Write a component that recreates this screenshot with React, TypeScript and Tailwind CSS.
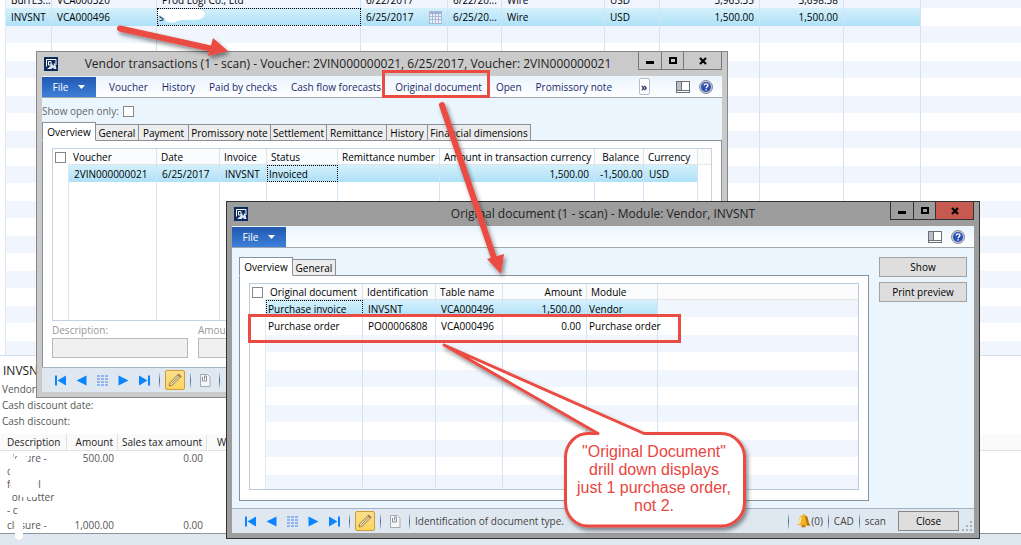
import type { ReactNode } from 'react';

interface Column {
  label?: string;
  width: string;
  align?: 'right';
}

interface GridProps {
  columns: Column[];
  rows: string[][];
  emptyRows?: number;
  selected: number;
  focusCell: number;
  striped?: boolean;
  selectable?: boolean;
  label: string;
}

const ledgerColumns: Column[] = [
  { width: 'w-[46px]' },
  { width: 'w-[105px]' },
  { width: 'w-[204px]' },
  { width: 'w-[87px]' },
  { width: 'w-[54px]' },
  { width: 'w-[103px]' },
  { width: 'w-[55px]' },
  { width: 'w-[100px]', align: 'right' },
  { width: 'w-[84px]', align: 'right' },
  { width: 'w-[77px]' },
];

const ledgerRows = [
  ['BurrES...', 'VCA000320', 'Prod Logi Co., Ltd', '6/22/2017', '6/22/20...', 'Wire', 'USD', '3,965.35', '3,698.58', ''],
  ['INVSNT', 'VCA000496', 's', '6/25/2017', '6/25/20...', 'Wire', 'USD', '1,500.00', '1,500.00', ''],
];

const transactionColumns: Column[] = [
  { label: 'Voucher', width: 'w-[88px]' },
  { label: 'Date', width: 'w-[63px]' },
  { label: 'Invoice', width: 'w-[47px]' },
  { label: 'Status', width: 'w-[71px]' },
  { label: 'Remittance number', width: 'w-[102px]' },
  { label: 'Amount in transaction currency', width: 'w-[155px]', align: 'right' },
  { label: 'Balance', width: 'w-[49px]', align: 'right' },
  { label: 'Currency', width: 'w-[54px]' },
];

const transactionRows = [
  ['2VIN000000021', '6/25/2017', 'INVSNT', 'Invoiced', '', '1,500.00', '-1,500.00', 'USD'],
];

const documentColumns: Column[] = [
  { label: 'Original document', width: 'w-[97px]' },
  { label: 'Identification', width: 'w-[73px]' },
  { label: 'Table name', width: 'w-[67px]' },
  { label: 'Amount', width: 'w-[84px]', align: 'right' },
  { label: 'Module', width: 'w-[71px]' },
];

const documentRows = [
  ['Purchase invoice', 'INVSNT', 'VCA000496', '1,500.00', 'Vendor'],
  ['Purchase order', 'PO00006808', 'VCA000496', '0.00', 'Purchase order'],
];

const transactionTabs = [
  { label: 'Overview', width: 'w-[54px]' },
  { label: 'General', width: 'w-[43px]' },
  { label: 'Payment', width: 'w-[50px]' },
  { label: 'Promissory note', width: 'w-[82px]' },
  { label: 'Settlement', width: 'w-[56px]' },
  { label: 'Remittance', width: 'w-[60px]' },
  { label: 'History', width: 'w-[41px]' },
  { label: 'Financial dimensions', width: 'w-[103px]' },
];

const documentTabs = [
  { label: 'Overview', width: 'w-[54px]' },
  { label: 'General', width: 'w-[43px]' },
];

const menuItems = [
  'Voucher',
  'History',
  'Paid by checks',
  'Cash flow forecasts',
  'Original document',
  'Open',
  'Promissory note',
];

function CalendarIcon() {
  return (
    <svg className="w-[13px] h-[13px] shrink-0" viewBox="0 0 13 13">
      <rect x="0.5" y="0.5" width="12" height="12" fill="#eef3fb" stroke="#a9b8d6" />
      <rect x="1" y="1" width="11" height="2" fill="#9fb0d4" />
      <path d="M3.5 3v9M6.5 3v9M9.5 3v9M1 5.5h11M1 8.5h11" stroke="#a9b8d6" />
    </svg>
  );
}

function Grid({ columns, rows, emptyRows = 0, selected, focusCell, striped, selectable, label }: GridProps) {
  const hasHeader = columns.some((col) => col.label);
  const blank = Array.from({ length: emptyRows }, () => columns.map(() => ''));
  const tight = striped && selectable;

  return (
    <table
      aria-label={label}
      className="w-full table-fixed border-separate border-spacing-0 leading-[14px] text-black"
    >
      <colgroup>
        {selectable && <col className="w-[16px]" />}
        {columns.map((col, i) => (
          <col key={i} className={col.width} />
        ))}
        <col />
      </colgroup>
      {hasHeader && (
        <thead>
          <tr className="h-[16px]">
            {selectable && (
              <th className="p-0">
                <input
                  type="checkbox"
                  aria-label="Select all"
                  className="block ml-[2px] size-[11px] appearance-none border border-[#888] bg-white"
                />
              </th>
            )}
            {columns.map((col) => (
              <th
                key={col.label}
                className={`border-r border-b border-[#dfe3e8] bg-[#fbfcfd] px-[4px] py-0 font-normal whitespace-nowrap ${
                  col.align === 'right' ? 'text-right' : 'text-left'
                }`}
              >
                {col.label}
              </th>
            ))}
            <th className="border-b border-[#e6e6e6] bg-[#fcfcfc] p-0" />
          </tr>
        </thead>
      )}
      <tbody>
        {[...rows, ...blank].map((row, r) => (
          <tr
            key={r}
            className={`${striped && r % 2 === 1 ? 'h-[18px]' : 'h-[17px]'} ${
              striped && r % 2 === 0 ? 'bg-[#f0f5fe]' : 'bg-white'
            }`}
          >
            {selectable && <td className="border-r border-[#dbe8f5] bg-white p-0" />}
            {row.map((value, c) => (
              <td
                key={c}
                className={`py-0 whitespace-nowrap ${
                  columns[c].align === 'right' ? 'text-right' : 'text-left'
                } ${r === selected ? 'bg-linear-to-b from-[#d4f0fb] to-[#aee1f8]' : ''} ${
                  r === selected && c === focusCell
                    ? 'border border-dotted border-black px-px'
                    : `border-r border-[#d3e3f3] ${
                        tight && (c === 0 || c === columns.length - 1) ? 'px-[2px]' : 'px-[5px]'
                      }`
                }`}
              >
                {!hasHeader && r === selected && c === 3 ? (
                  <span className="flex items-center justify-between">
                    {value}
                    <CalendarIcon />
                  </span>
                ) : (
                  value
                )}
              </td>
            ))}
            <td className="p-0" />
          </tr>
        ))}
      </tbody>
    </table>
  );
}

function AppIcon() {
  return (
    <svg className="size-[14px]" viewBox="0 0 14 14">
      <rect width="14" height="14" fill="#0d2a5c" />
      <path d="M2.500 9.500v-7h9.500V8" fill="none" stroke="#fff" />
      <path d="M4.500 4.500h2.500v3.500h-2.500z" fill="none" stroke="#fff" />
      <path d="M3 12l3-2.500 2-3.500 1 3 2-3.500 1.500 6.500H10L9 10.500 7.500 12z" fill="#dfe6f0" />
    </svg>
  );
}

interface TitleBarProps {
  title: string;
  active?: boolean;
}

function TitleBar({ title, active }: TitleBarProps) {
  const edge = active ? 'border-[#333]' : 'border-[#777]';
  return (
    <header className="relative flex h-[24px] items-center pl-[2px]">
      <AppIcon />
      <h2
        className={`text-center text-[12px] leading-4 whitespace-nowrap text-[#222] ${
          active ? 'absolute inset-x-0' : 'flex-1'
        }`}
      >
        {title}
      </h2>
      <div className={`relative ml-auto flex h-[18px] self-start border border-t-0 ${edge}`}>
        <button aria-label="Minimize" className={`grid w-[23px] place-items-center border-r ${edge}`}>
          <svg className="size-[10px]" viewBox="0 0 10 10">
            <path d="M1 6.500h8" stroke="#000" strokeWidth="3" />
          </svg>
        </button>
        <button aria-label="Maximize" className={`grid w-[22px] place-items-center border-r ${edge}`}>
          <svg className="size-[10px]" viewBox="0 0 10 10">
            <rect x="2" y="2" width="6" height="5" fill="none" stroke="#000" strokeWidth="2" />
          </svg>
        </button>
        <button
          aria-label="Close window"
          className={`grid w-[37px] place-items-center ${active ? 'bg-[#c75a50]' : ''}`}
        >
          <svg className="size-[10px]" viewBox="0 0 10 10">
            <path d="M2 2l6 6M8 2l-6 6" stroke="#000" strokeWidth="2.200" />
          </svg>
        </button>
      </div>
    </header>
  );
}

function PaneIcon() {
  return (
    <svg className="h-[12px] w-[14px]" viewBox="0 0 14 12">
      <rect x="0.500" y="0.500" width="13" height="11" fill="#fff" stroke="#6b6f78" />
      <rect x="1" y="1" width="4" height="8" fill="#b9bec6" />
      <path d="M5.500 1v8M1 9.500h12" stroke="#6b6f78" />
    </svg>
  );
}

function HelpIcon() {
  return (
    <svg className="size-[14px]" viewBox="0 0 14 14">
      <circle cx="7" cy="7" r="6.500" fill="#c4c8d0" stroke="#8a8f9a" />
      <circle cx="7" cy="7" r="5" fill="#2b50b4" />
      <path
        d="M5.200 5.600c0-2.400 3.800-2.200 3.700-.1 0 1.300-1.800 1.300-1.800 2.700M7.100 9.200v1.300"
        fill="none"
        stroke="#fff"
        strokeWidth="1.400"
      />
    </svg>
  );
}

function Ribbon({ children }: { children?: ReactNode }) {
  return (
    <nav className="flex h-[22px] items-center border-b border-[#9fa6ae] bg-linear-to-b from-[#eaf4fd] to-white pr-[9px]">
      <button className="flex h-[20px] w-[54px] items-center justify-center gap-[10px] bg-linear-to-b from-[#2258b0] to-[#3d80d8] text-white">
        File
        <svg className="h-[4px] w-[7px]" viewBox="0 0 7 4">
          <path d="M0 0h7L3.500 4z" fill="#fff" />
        </svg>
      </button>
      {children}
      <button aria-label="View" className="ml-auto">
        <PaneIcon />
      </button>
      <button aria-label="Help" className="ml-[9px]">
        <HelpIcon />
      </button>
    </nav>
  );
}

function Tabs({ tabs }: { tabs: { label: string; width: string }[] }) {
  return (
    <div role="tablist" className="relative -mb-px flex items-end">
      {tabs.map((tab, i) => (
        <button
          key={tab.label}
          role="tab"
          aria-selected={i === 0}
          className={`flex items-center justify-center border border-[#8b919b] whitespace-nowrap ${tab.width} ${
            i === 0 ? 'h-[19px] border-b-white bg-white' : 'h-[17px] border-l-0 bg-[#ececec]'
          }`}
        >
          {tab.label}
        </button>
      ))}
    </div>
  );
}

function Separator() {
  return <span className="h-[15px] w-px bg-linear-to-b from-[#c8d4e0] via-[#4b6a8c] to-[#c8d4e0]" />;
}

function StatusBar({ children }: { children?: ReactNode }) {
  return (
    <footer className="flex h-[25px] shrink-0 items-center border-t border-[#a3b3c3] bg-[#dfe8f0] pr-[2px] pl-[13px] text-[#444]">
      <div className="flex items-center gap-[10px]">
        <button aria-label="First record">
          <svg className="size-[11px]" viewBox="0 0 11 11">
            <path d="M0 .5h2v10H0zM11 .5v10L2.500 5.500z" fill="#0a84ff" />
          </svg>
        </button>
        <button aria-label="Previous record">
          <svg className="size-[11px]" viewBox="0 0 11 11">
            <path d="M10.500 .5v10L.5 5.500z" fill="#0a84ff" />
          </svg>
        </button>
        <button aria-label="Grid view">
          <svg className="size-[11px]" viewBox="0 0 11 11">
            {[0, 3, 6, 9].map((y) =>
              [0, 4, 8].map((x) => (
                <rect key={`${x}-${y}`} x={x} y={y} width="3" height="2" fill="#8fb4ee" />
              ))
            )}
          </svg>
        </button>
        <button aria-label="Next record">
          <svg className="size-[11px]" viewBox="0 0 11 11">
            <path d="M.5 .5v10l10-5z" fill="#0a84ff" />
          </svg>
        </button>
        <button aria-label="Last record">
          <svg className="size-[11px]" viewBox="0 0 11 11">
            <path d="M9 .5h2v10H9zM0 .5v10l8.500-5z" fill="#0a84ff" />
          </svg>
        </button>
      </div>
      <div className="ml-[9px] flex items-center gap-[5px]">
        <Separator />
        <button
          aria-label="Edit"
          className="grid size-[20px] place-items-center rounded-[2px] border border-[#d19a3a] bg-linear-to-b from-[#fbe089] to-[#fdd45c]"
        >
          <svg className="size-[14px]" viewBox="0 0 14 14">
            <path d="M1 13l1-3.500 8.500-8.500 2.500 2.500-8.500 8.500z" fill="#f2dba0" stroke="#7a6844" strokeWidth="0.800" />
            <path d="M3.500 10.500l7-7" stroke="#8a7a55" strokeWidth="0.800" />
            <path d="M9.500 2l2.500 2.500 1.200-1.200-2.500-2.500z" fill="#b06a5a" />
          </svg>
        </button>
        <Separator />
        <button aria-label="Attachments" className="mx-[3px]">
          <svg className="h-[13px] w-[12px]" viewBox="0 0 12 13">
            <path d="M1.500 .5h7l2.500 2.500v9.500h-9.500z" fill="#f5f6f8" stroke="#a4aab2" />
            <path d="M3.500 3v4h4V2H5.500v3.500" fill="none" stroke="#8a9099" />
          </svg>
        </button>
        <Separator />
      </div>
      {children}
    </footer>
  );
}

function BellIcon() {
  return (
    <svg className="h-[14px] w-[14px]" viewBox="0 0 14 14">
      <path d="M0 11c2-1.500 2-3 2.300-6C2.600 2.500 4 1.500 5.500 1.500c0-2 2.500-2 2.500 0 2 .5 3 2 3.200 4.500.2 2 .6 3.500 2.300 5.500z" fill="#f0b429" />
      <path d="M4 3.500c-1 2-.5 4-1.800 6.500" fill="none" stroke="#fdeaa5" strokeWidth="1.500" />
      <path d="M8 1.500c2 .5 3 2 3.200 4.500.2 2 .6 3.500 2.300 5.500H10z" fill="#b5700f" />
      <ellipse cx="6.500" cy="12" rx="2.500" ry="1.500" fill="#c98412" />
    </svg>
  );
}

function SizeGrip() {
  const dots = [[8, 0], [8, 4], [4, 4], [8, 8], [4, 8], [0, 8]];
  return (
    <svg className="size-[10px] self-end" viewBox="0 0 10 10">
      {dots.map(([x, y]) => (
        <rect key={`${x}-${y}`} x={x} y={y} width="2" height="2" fill="#a9b1ba" />
      ))}
    </svg>
  );
}

function InvoicePreview() {
  return (
    <section className="relative flex-1 border-b border-[#8d979f] bg-white text-[#555]">
      <h1 className="pt-[5px] pl-[3px] text-[12px] leading-5 text-[#222]">INVSNT</h1>
      <div className="mb-[5px] pl-[2px]">
        <p>Vendor</p>
        <p>Cash discount date:</p>
        <p>Cash discount:</p>
      </div>
      <table aria-label="Invoice lines" className="w-full table-fixed border-separate border-spacing-0">
        <colgroup>
          <col className="w-[67px]" />
          <col className="w-[51px]" />
          <col className="w-[89px]" />
          <col />
        </colgroup>
        <thead className="bg-[#fafafa] text-[#222]">
          <tr className="h-[16px]">
            <th className="border-r border-b border-[#e2e2e2] py-0 pl-[7px] text-left font-normal">Description</th>
            <th className="border-r border-b border-[#e2e2e2] px-[4px] py-0 text-right font-normal">Amount</th>
            <th className="border-r border-b border-[#e2e2e2] px-[4px] py-0 text-right font-normal whitespace-nowrap">
              Sales tax amount
            </th>
            <th className="border-b border-[#e2e2e2] py-0 pl-[10px] text-left font-normal">Withholding tax</th>
          </tr>
        </thead>
        <tbody className="align-top leading-[13px]">
          <tr>
            <td className="py-px pl-[7px]">
              closure -<br />
              custom<br />
              for real<br />
              con cutter<br />
              - c
            </td>
            <td className="px-[4px] py-px text-right">500.00</td>
            <td className="px-[4px] py-px text-right">0.00</td>
            <td />
          </tr>
          <tr>
            <td className="py-px pl-[7px]">closure -</td>
            <td className="px-[4px] py-px text-right">1,000.00</td>
            <td className="px-[4px] py-px text-right">0.00</td>
            <td />
          </tr>
        </tbody>
      </table>
    </section>
  );
}

function VendorTransactions() {
  return (
    <section className="absolute top-[51px] left-[36px] flex h-[347px] w-[692px] flex-col border border-[#888] bg-[#cacaca] px-[5px] pb-[5px]">
      <TitleBar title="Vendor transactions (1 - scan) - Voucher: 2VIN000000021, 6/25/2017, Voucher: 2VIN000000021" />
      <Ribbon>
        <div className="flex gap-[14px] pl-[13px] text-[#1b2a6b]">
          {menuItems.map((item) => (
            <button key={item} className="whitespace-nowrap">
              {item}
            </button>
          ))}
        </div>
        <button
          aria-label="More commands"
          className="ml-auto h-[17px] w-[11px] rounded-[2px] border border-[#b4bcc6] bg-white leading-3 font-bold text-[#1b2a6b]"
        >
          »
        </button>
      </Ribbon>
      <div className="flex flex-1 flex-col bg-[#eaf5fe]">
        <label className="mt-[5px] mb-[3px] flex items-center gap-[4px] text-[#666]">
          Show open only:
          <input type="checkbox" className="size-[11px] appearance-none border border-[#888] bg-white" />
        </label>
        <Tabs tabs={transactionTabs} />
        <div className="flex-1 border border-b-0 border-[#8b919b] bg-white px-[9px] pt-[7px]">
          <div className="h-[173px] overflow-hidden border border-[#c3d3e4]">
            <Grid
              label="Transactions"
              columns={transactionColumns}
              rows={transactionRows}
              emptyRows={10}
              selected={0}
              focusCell={3}
              selectable
            />
          </div>
          <div className="flex gap-[10px] pt-px text-[#999]">
            <label className="w-[136px]">
              Description:
              <input className="block h-[20px] w-full border border-[#b9b9b9] bg-[#f0f0f0]" readOnly />
            </label>
            <label className="w-[136px]">
              Amount:
              <input className="block h-[20px] w-full border border-[#b9b9b9] bg-[#f0f0f0]" readOnly />
            </label>
          </div>
        </div>
      </div>
      <StatusBar />
    </section>
  );
}

function OriginalDocument() {
  return (
    <section className="absolute top-[201px] left-[226px] flex h-[338px] w-[754px] flex-col border border-[#333] bg-[#9d9d9d] px-[5px] pb-[5px]">
      <TitleBar title="Original document (1 - scan) - Module: Vendor, INVSNT" active />
      <Ribbon />
      <div className="flex flex-1 gap-[10px] bg-[#eaf5fe] px-[7px] pt-[9px] pb-[7px]">
        <div className="flex flex-1 flex-col">
          <Tabs tabs={documentTabs} />
          <div className="flex-1 border border-[#8b919b] bg-white px-[9px] pt-[7px]">
            <div className="h-[207px] overflow-hidden border border-[#b9cbdf]">
              <Grid
                label="Original documents"
                columns={documentColumns}
                rows={documentRows}
                emptyRows={9}
                selected={0}
                focusCell={0}
                striped
                selectable
              />
            </div>
          </div>
        </div>
        <div className="flex w-[88px] flex-col gap-[5px]">
          <button className="h-[20px] border border-[#a2a2a2] bg-[#dedede]">Show</button>
          <button className="h-[20px] border border-[#a2a2a2] bg-[#dedede]">Print preview</button>
        </div>
      </div>
      <StatusBar>
        <span className="pl-[5px]">Identification of document type.</span>
        <div className="ml-auto flex items-center gap-[5px]">
          <Separator />
          <button className="ml-[3px] flex items-center">
            <BellIcon />
            (0)
          </button>
          <Separator />
          <span>CAD</span>
          <Separator />
          <span>scan</span>
          <button className="mr-[-2px] ml-[7px] h-[20px] w-[61px] border border-[#888] bg-[#dedede] text-black">
            Close
          </button>
          <SizeGrip />
        </div>
      </StatusBar>
    </section>
  );
}

// Red arrows, frames and speech bubble
function Annotations() {
  return (
    <div className="pointer-events-none absolute top-0 left-0 text-[#e8453f]">
      <svg className="h-[545px] w-[1021px]" viewBox="0 0 1021 545" fill="none">
        <defs>
          <filter id="shadow" x="-20%" y="-20%" width="150%" height="150%">
            <feDropShadow dx="2" dy="3" stdDeviation="2" floodColor="#000" floodOpacity="0.45" />
          </filter>
        </defs>
        <g filter="url(#shadow)">
          <path d="M120 28.500L213 49" stroke="#ea4b43" strokeWidth="6" strokeLinecap="round" />
          <path d="M213 38l15 13-20 5z" fill="#ea4b43" />
          <path d="M442 105L494 258" stroke="#ea4b43" strokeWidth="6" strokeLinecap="round" />
          <path d="M487 259l17-5-3 20z" fill="#ea4b43" />
          <path
            d="M444 345L598 433.500H588A22.500 24 0 0 0 565.500 457V503A22.500 23 0 0 0 588 526H721A23.500 23 0 0 0 744.500 503V457A23.500 24 0 0 0 721 433.500H644Z"
            fill="#fff"
            stroke="#ea4b43"
            strokeWidth="3"
            strokeLinejoin="round"
          />
        </g>
        <rect x="383.500" y="71.500" width="105" height="25" stroke="#ea4b43" strokeWidth="3" />
        <rect x="249.500" y="315.500" width="430" height="26" stroke="#ea4b43" strokeWidth="3" />
      </svg>
      <p className="absolute top-[443px] left-[571px] w-[166px] text-center font-['Liberation_Sans',sans-serif] text-[16px] leading-[18px]">
        "Original Document"
        <br />
        drill down displays
        <br />
        just 1 purchase order,
        <br />
        not 2.
      </p>
    </div>
  );
}

// White brush strokes over the names
function ErasedNames() {
  return (
    <svg className="absolute top-0 left-0 h-[545px] w-[220px]" viewBox="0 0 220 545" fill="#fff">
      <path d="M158 9h40q8 2 7 6-2 5-12 5-14-1-17 2-6 2-10-1-1-4-5-5l-3-1z" />
      <path d="M6 452h6l2 6 2 1 1-3h8l5 2-4 7H6z" />
      <path d="M10 464h20l6 5 8-1v4l-4 4H20v13h-8l-2-6z" />
      <path d="M20 475h15l3 10v12H20z" />
      <path d="M6 490h6v11H6z" />
      <path d="M15 515h8v22q-4 6-8 0z" />
    </svg>
  );
}

export default function App() {
  return (
    <main className="relative flex h-screen flex-col overflow-hidden bg-[#dfe8f0] font-['Open_Sans','Noto_Sans',sans-serif] text-[10px] leading-4">
      <div className="h-[356px] shrink-0 overflow-hidden border-b border-[#cfe0f0] bg-white">
        <div className="-mt-[9px] ml-[5px] border-l border-[#dbe8f5]">
          <Grid
            label="Invoice journal"
            columns={ledgerColumns}
            rows={ledgerRows}
            emptyRows={19}
            selected={1}
            focusCell={2}
            striped
          />
        </div>
      </div>
      <InvoicePreview />
      <div className="h-[12px] shrink-0" />
      <ErasedNames />
      <VendorTransactions />
      <OriginalDocument />
      <Annotations />
    </main>
  );
}
